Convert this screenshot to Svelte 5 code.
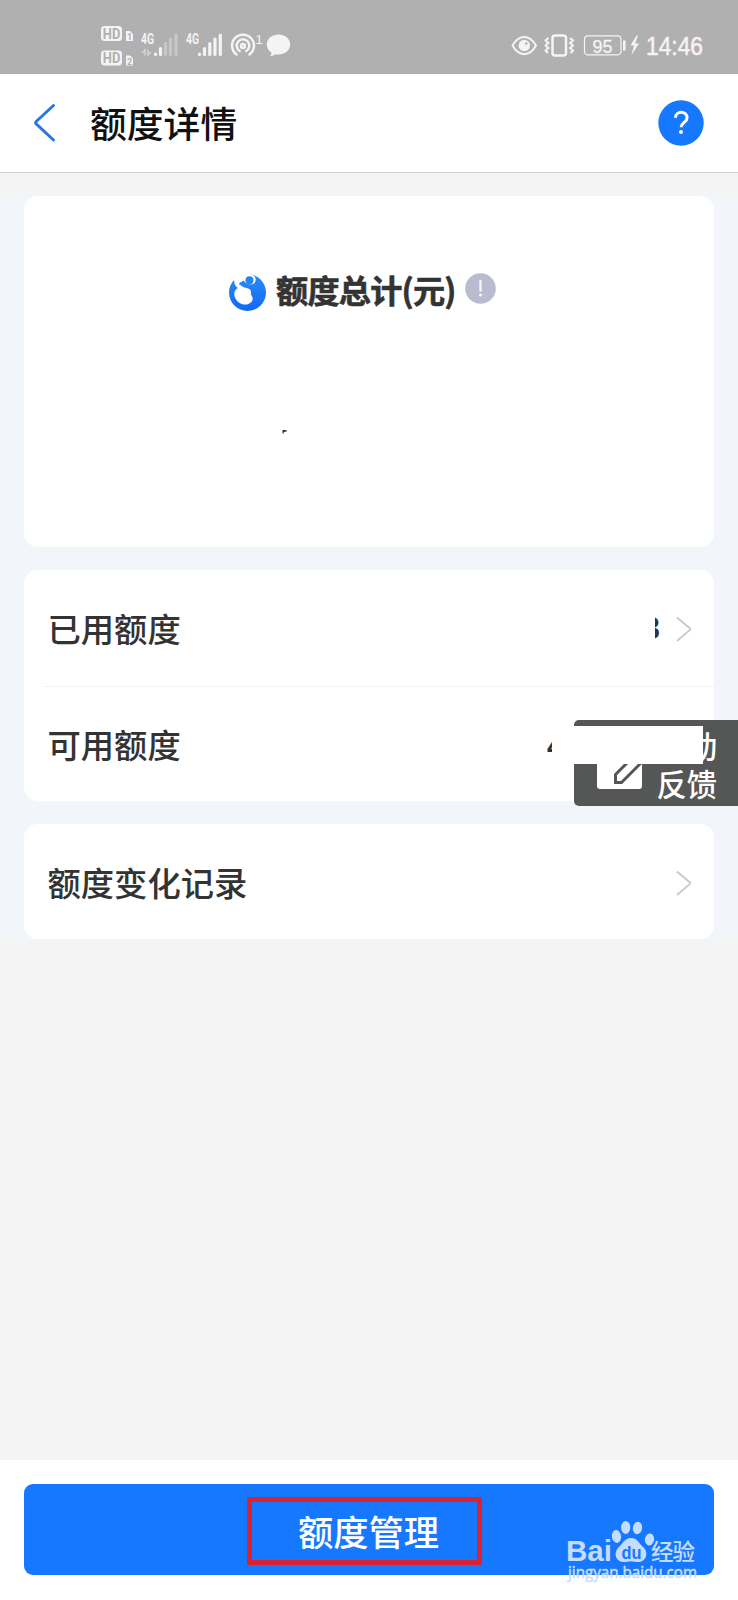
<!--
  App.svelte - Credit limit details page
  Status bar, header, limit cards and the bottom action.
-->

<script lang="ts">
  interface Row {
    label: string;
    value?: string;
    kind?: string;
    arrow: boolean;
  }

  const groups: Row[][] = [
    [
      { label: '已用额度', value: '3', kind: 'used', arrow: true },
      { label: '可用额度', value: '4', kind: 'free', arrow: false },
    ],
    [{ label: '额度变化记录', arrow: true }],
  ];
</script>

<div class="page">
  <div class="status">
    <svg class="status-left" width="210" height="74" viewBox="90 0 210 74" fill="#f4f4f4">
      <!-- HD badges -->
      <g>
        <rect x="101" y="26" width="21" height="15" rx="3.5" />
        <rect x="101" y="50.5" width="21" height="15" rx="3.5" />
        <path d="M126 31h4l3 3v7h-7zM126 55.500h4l3 3v7h-7z" />
      </g>
      <g class="hd" fill="#b0b0b0">
        <text x="102.800" y="38.500" font-size="14" textLength="17.500" lengthAdjust="spacingAndGlyphs">HD</text>
        <text x="102.800" y="63" font-size="14" textLength="17.500" lengthAdjust="spacingAndGlyphs">HD</text>
        <text x="127" y="40" font-size="9">1</text>
        <text x="127" y="64.500" font-size="9">2</text>
      </g>
      <!-- signal bars -->
      <g class="hd">
        <text x="141" y="44" font-size="14" textLength="13" lengthAdjust="spacingAndGlyphs">4G</text>
        <text x="186" y="44" font-size="14" textLength="13" lengthAdjust="spacingAndGlyphs">4G</text>
      </g>
      <g stroke="#f4f4f4" stroke-width="3.200" stroke-linecap="round">
        <path d="M155.500 54v.5M160.500 48.500v6" />
        <path d="M165.500 43.500v11M170.500 39v15.500M176 35v19.500" opacity=".35" />
        <path d="M199.500 54v.5M204.500 48.500v6M209.800 43.500v11M215 39v15.500M220.300 35v19.500" />
      </g>
      <path d="M142 53l3-3v5.500M151 52l-3 3v-5.500" fill="none" stroke="#f4f4f4" stroke-width="1.700" opacity=".5" />
      <!-- hotspot -->
      <g fill="none" stroke="#f4f4f4" stroke-width="2.500" stroke-linecap="round">
        <path d="M236.500 54.500a11 11 0 1 1 13 0" />
        <path d="M239.700 51a6.300 6.300 0 1 1 6.600 0" />
        <circle cx="243" cy="46" r="1.900" />
      </g>
      <text class="num" x="255.500" y="43.500" font-size="13">1</text>
      <path d="M278.500 34.500c6.500 0 11.700 4.300 11.700 10s-5.200 10-11.700 10c-1 0-2-.1-3-.3-1.500 1.100-3 1.800-5.500 1.900 1.300-1.200 1.500-2.200 1.500-3.400-3-2-4.700-4.800-4.700-8.200 0-5.700 5.200-10 11.700-10z" />
    </svg>
    <svg class="status-right" width="238" height="74" viewBox="500 0 238 74" fill="none" stroke="#f4f4f4">
      <path d="M512.500 45.500c6.500-11.500 17-11.500 23.500 0-6.500 11.500-17 11.500-23.500 0z" stroke-width="2" stroke-linejoin="round" />
      <circle cx="524.300" cy="45.500" r="5.700" fill="#f4f4f4" stroke="none" />
      <circle cx="526.300" cy="43.500" r="1.300" fill="#b0b0b0" stroke="none" />
      <rect x="552.500" y="35.500" width="13.500" height="20" rx="2.500" stroke-width="2.500" />
      <path d="M548.500 38l-3 2.500 3 2.500-3 2.500 3 2.500-3 2.500 2.500 2.500M570 38l3 2.500-3 2.500 3 2.500-3 2.500 3 2.500-2.500 2.500" stroke-width="2.200" stroke-linejoin="round" />
      <rect x="584.500" y="35.800" width="36.500" height="19" rx="3.500" stroke-width="1.200" />
      <path d="M624.300 40.500v10" stroke-width="2.600" />
      <path d="M636.500 35.500l-6 10h3.500l-2.500 9.500 7.500-11.500h-4l3-8z" fill="#f4f4f4" stroke="none" />
      <g class="num" fill="#f4f4f4" stroke="none">
        <text x="592.500" y="52.500" font-size="18.500" textLength="20" lengthAdjust="spacingAndGlyphs" stroke="#f4f4f4" stroke-width=".3">95</text>
        <text x="646" y="55.300" font-size="25" textLength="57" lengthAdjust="spacingAndGlyphs" stroke="#f4f4f4" stroke-width=".5">14:46</text>
      </g>
    </svg>
  </div>

  <header class="header">
    <svg class="back" width="24" height="40" viewBox="0 0 24 40" fill="none" stroke="#2b78dc" stroke-width="3" stroke-linecap="round" stroke-linejoin="round">
      <path d="M20.500 2.500L3.200 18.500q-1.200 1.200 0 2.400L20.500 37" />
    </svg>
    <h1>额度详情</h1>
    <svg class="help" width="46" height="46" viewBox="0 0 46 46">
      <circle cx="23" cy="23" r="22.700" fill="#1677ff" />
      <path d="M17.500 17.800c0-7.300 11.600-7.300 11.600 0 0 4.500-6 4.800-6 9.500" fill="none" stroke="#fff" stroke-width="3" />
      <circle cx="23" cy="32" r="2" fill="#fff" />
    </svg>
  </header>

  <main class="content">
    <section class="card total">
      <div class="total-title">
        <svg width="38" height="40" viewBox="0 0 38 40">
          <defs>
            <linearGradient id="logo" x1="0" y1="0" x2="0" y2="1">
              <stop offset="0" stop-color="#2c8cf2" />
              <stop offset="1" stop-color="#1268f8" />
            </linearGradient>
          </defs>
          <circle cx="18.500" cy="20.500" r="18.500" fill="url(#logo)" />
          <g fill="#fff">
            <path d="M5.500 9L0 5V0h21.500v3L16 7l-4 3.500L8 14q-3-2-2.500-5z" />
            <path d="M5.500 9l5.500 1.500c0 2.500 2 4 4.500 5 4 1 6.500 1.500 6.500 4.500-.5 2 .5 3.500 1.500 5.500 1 3-2 6.500-6 7C12 33 7 29.500 5.500 24c-.8-4 .8-6.500 3.500-8-2.500-1.500-4-4-3.500-7z" />
            <path d="M14 8c1-5 6-7.500 10-5 3.500 2.500 3.500 7 .5 9.500l-5 1z" />
          </g>
          <path d="M11.800 11.800c3-.8 5 1.700 8.500 2 4.500.2 8.200-2 8.200-6" fill="none" stroke="#2484f4" stroke-width="3" stroke-linecap="round" />
          <circle cx="20.500" cy="8.300" r="4" fill="#2484f4" />
        </svg>
        <span>额度总计(元)</span>
        <svg class="info" width="31" height="31" viewBox="0 0 31 31">
          <circle cx="15.500" cy="15.500" r="15.300" fill="#bbbbcf" />
          <path d="M15.500 8v9.500" stroke="#f4f4fa" stroke-width="2.400" stroke-linecap="round" />
          <circle cx="15.500" cy="22" r="1.600" fill="#f4f4fa" />
        </svg>
      </div>
      <svg class="speck" width="6" height="5" viewBox="0 0 6 5"><path d="M.5 0h4v1.500l-2.500.5-.5 1.500h-1z" fill="#333" /></svg>
    </section>

    {#each groups as rows}
      <section class="card">
        {#each rows as row}
          <div class="row">
            <span class="label">{row.label}</span>
            {#if row.value}
              <span class="value {row.kind}"><span>{row.value}</span></span>
            {/if}
            {#if row.arrow}
              <svg class="arrow" width="16" height="26" viewBox="0 0 16 26" fill="none" stroke="#c8c8c8" stroke-width="1.800" stroke-linecap="round" stroke-linejoin="round">
                <path d="M1.500 2L14 12.500q.7.700 0 1.400L1.500 24.500" />
              </svg>
            {/if}
          </div>
        {/each}
      </section>
    {/each}
  </main>

  <footer class="footer">
    <button class="manage"><span>额度管理</span></button>
  </footer>

  <div class="feedback">
    <svg width="46" height="46" viewBox="0 0 46 46">
      <rect width="45" height="45" rx="3" fill="#fff" />
      <path d="M18.500 38.500v-8L41 8l7 7-23.500 23.500z" fill="#fff" stroke="#555656" stroke-width="3" />
    </svg>
    <p>动<br />反馈</p>
    <div class="cover"></div>
  </div>

  <svg class="watermark" width="140" height="68" viewBox="0 0 140 68" fill="#c3dcff">
    <g class="brand">
      <text x="-1" y="41" font-size="30" textLength="46" lengthAdjust="spacingAndGlyphs">Bai</text>
      <ellipse cx="49.500" cy="16.500" rx="4.600" ry="6.500" transform="rotate(-8 49.500 16.500)" />
      <ellipse cx="58.700" cy="7.500" rx="4.600" ry="6.500" />
      <ellipse cx="70.500" cy="8" rx="4.600" ry="6.300" transform="rotate(8 70.500 8)" />
      <ellipse cx="82.500" cy="19.500" rx="4.600" ry="6" transform="rotate(10 82.500 19.500)" />
      <path d="M64 18c6 0 8 5 12 9 6 5 3.500 15-4.500 15-3 0-5-.8-7.500-.8s-4.500.8-7.500.8c-8 0-10.500-10-4.500-15 4-4 6-9 12-9z" />
      <text x="54.500" y="39" font-size="19" fill="#1677ff" textLength="20" lengthAdjust="spacingAndGlyphs">du</text>
    </g>
    <text class="jy" x="84" y="39.500" font-size="22.500" textLength="44">经验</text>
    <text class="url" x="1" y="58" font-size="16" textLength="129" lengthAdjust="spacingAndGlyphs" stroke="#dde3ee" stroke-width=".5" paint-order="stroke">jingyan.baidu.com</text>
  </svg>
  <div class="mark"></div>
</div>

<style>
  :global(body) {
    margin: 0;
  }

  .page {
    position: relative;
    display: flex;
    flex-direction: column;
    width: 738px;
    height: 1600px;
    overflow: hidden;
    background: #f4f4f4;
    color: #333;
    font-family: 'Noto Sans CJK SC', sans-serif;
  }

  .status {
    display: flex;
    justify-content: space-between;
    height: 74px;
    padding-left: 90px;
    background: #b0b0b0;
  }

  .hd {
    font-family: Roboto, sans-serif;
    font-weight: 700;
  }

  .num {
    font-family: 'Liberation Sans', sans-serif;
  }

  .header {
    display: flex;
    align-items: center;
    box-sizing: border-box;
    height: 99px;
    padding: 0 34px 0 33px;
    background: #fff;
    border-bottom: 1px solid #cfcfcf;
  }

  h1 {
    flex: 1;
    margin: -2px 0 0 33px;
    font-size: 36.8px;
    font-weight: 500;
    line-height: 54px;
    color: #111;
  }

  .content {
    display: flex;
    flex-direction: column;
    gap: 23px;
    margin-top: 23px;
    padding: 0 24px;
    background: #f2f5fa;
  }

  .card {
    border-radius: 14px;
    background: #fff;
  }

  .total {
    height: 351px;
  }

  .total-title {
    display: flex;
    align-items: center;
    padding: 76px 0 0 205px;
    font-size: 32.2px;
    font-weight: 700;
    line-height: 40px;
    letter-spacing: -0.8px;
    -webkit-text-stroke: 0.6px #333;
  }

  .total-title span {
    margin: -7px 0 0 9px;
  }

  .info {
    margin: -8px 0 0 9px;
  }

  .speck {
    display: block;
    margin: 118px 0 0 258px;
  }

  .row {
    display: flex;
    align-items: center;
    box-sizing: border-box;
    height: 115px;
    margin-left: 20px;
    padding: 0 22px 0 4px;
  }

  .row:first-child:not(:last-child) {
    height: 116px;
  }

  .row + .row {
    border-top: 1px solid #f2f2f2;
  }

  .label {
    flex: 1;
    margin: -1px 0 0 -0.5px;
    font-size: 33.3px;
    font-weight: 500;
  }

  .arrow {
    margin-top: 2px;
  }

  /* only a sliver of each amount stays visible */
  .value {
    display: flex;
    justify-content: flex-end;
    width: 5px;
    height: 34px;
    margin: 2px 16px 0 0;
    overflow: hidden;
    font: 700 31px/34px 'Liberation Sans', sans-serif;
  }

  .free {
    justify-content: flex-start;
    height: 11px;
    margin: 5px 140px 0 0;
    line-height: 11px;
  }

  .footer {
    box-sizing: border-box;
    height: 140px;
    margin-top: auto;
    padding: 24px 24px 0;
    background: #fff;
  }

  .manage {
    display: block;
    width: 100%;
    height: 91px;
    padding: 0 1px 0 0;
    border: 0;
    border-radius: 9px;
    background: #1677ff;
    color: #fff;
    font: 500 35.3px/93px 'Noto Sans CJK SC', sans-serif;
  }

  .feedback {
    position: absolute;
    top: 720px;
    right: 0;
    display: flex;
    box-sizing: border-box;
    width: 164px;
    height: 86px;
    padding: 24px 21px 0 23px;
    border-radius: 5px 0 0 5px;
    background: #555656;
  }

  .feedback p {
    flex: 1;
    margin: -18px 0 0;
    font-size: 30.3px;
    font-weight: 500;
    line-height: 38px;
    text-align: right;
    color: #fff;
  }

  .cover {
    position: absolute;
    top: 6px;
    left: 0;
    width: 129px;
    height: 38px;
    background: #fff;
  }

  .mark {
    position: absolute;
    top: 1497px;
    left: 247px;
    box-sizing: border-box;
    width: 235px;
    height: 68px;
    border: 5px solid #dc2230;
  }

  .watermark {
    position: absolute;
    top: 1520px;
    left: 567px;
  }

  .brand {
    font-family: 'Liberation Sans', sans-serif;
    font-weight: 700;
  }

  .jy {
    font-weight: 500;
  }

  .url {
    font-family: 'Open Sans', sans-serif;
  }
</style>
